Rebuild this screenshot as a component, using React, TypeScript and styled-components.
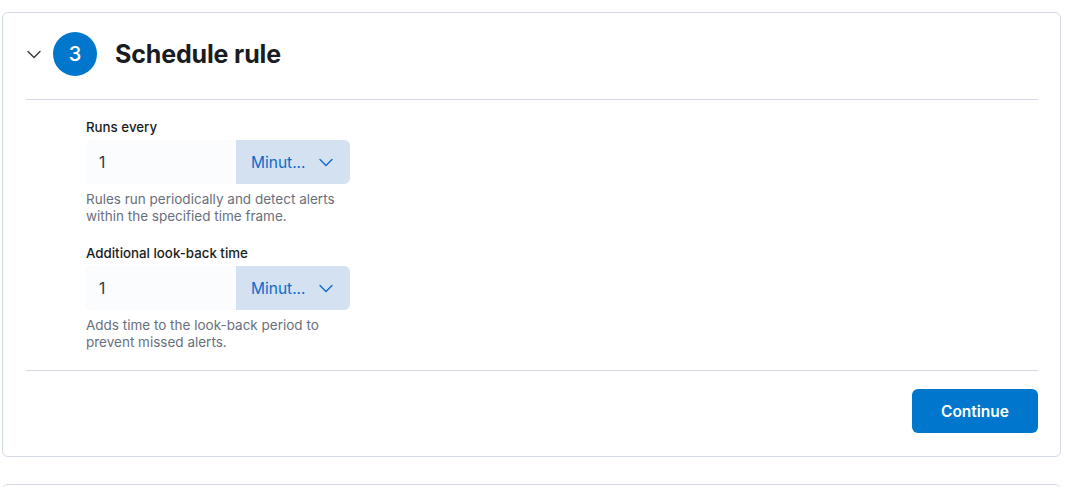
import React from "react";
import styled, { createGlobalStyle } from "styled-components";

const blue = "#0077cc";
const border = "#d3dae6";

const GlobalStyle = createGlobalStyle`
  html, body {
    margin: 0;
    padding: 0;
    background: #ffffff;
    overflow: hidden;
  }
  body {
    font-family: Inter, "Noto Sans", sans-serif;
    color: #1a1c21;
  }
`;

const Page = styled.div`
  padding: 12px 21px 0 2px;
  display: flex;
  flex-direction: column;
  gap: 27px;
`;

const Panel = styled.section<{ $ghost?: boolean }>`
  border: 1px solid ${border};
  border-radius: 6px;
  padding: 0 22px 0 23px;
  min-height: ${(p) => (p.$ghost ? "60px" : "auto")};
`;

const Header = styled.div`
  display: flex;
  align-items: center;
  padding: 19px 0 23px;
`;

const Toggle = styled.button`
  width: 16px;
  height: 16px;
  padding: 0;
  border: 0;
  background: none;
  display: flex;
  align-items: center;
  justify-content: center;
  color: #343741;
  margin-right: 11px;
`;

const StepNumber = styled.div`
  width: 44px;
  height: 44px;
  border-radius: 50%;
  background: ${blue};
  color: #fff;
  font-size: 20px;
  font-weight: 500;
  display: flex;
  align-items: center;
  justify-content: center;
  margin-right: 18px;
`;

const Title = styled.h2`
  margin: 0;
  font-size: 25px;
  font-weight: 700;
  letter-spacing: -0.15px;
  color: #1a1c21;
`;

const Rule = styled.hr`
  margin: 0;
  border: 0;
  border-top: 1px solid ${border};
`;

const Form = styled.div`
  padding: 19px 0 19px 60px;
  display: flex;
  flex-direction: column;
  gap: 20px;
`;

const Field = styled.div`
  display: flex;
  flex-direction: column;
  width: 264px;
`;

const Label = styled.label`
  font-size: 13.3px;
  line-height: 16px;
  font-weight: 500;
  color: #1a1c21;
  margin-bottom: 5px;
`;

const Group = styled.div`
  display: flex;
  height: 44px;
  border-radius: 6px;
  overflow: hidden;
  box-shadow: inset 0 0 0 1px rgba(32, 60, 110, 0.1);
`;

const NumberInput = styled.div`
  width: 150px;
  background: #fbfcfd;
  display: flex;
  align-items: center;
  padding-left: 13px;
  box-sizing: border-box;
  font-size: 15.5px;
  color: #343741;
`;

const Select = styled.div`
  flex: 1;
  background: #d4e1f0;
  display: flex;
  align-items: center;
  justify-content: space-between;
  padding: 0 16px 0 15px;
  font-size: 15.5px;
  color: #0b6bcb;
`;

const Help = styled.div`
  margin-top: 7px;
  font-size: 13.5px;
  line-height: 17px;
  color: #69707d;
`;

const Footer = styled.div`
  display: flex;
  justify-content: flex-end;
  padding: 18px 0 23px;
`;

const Button = styled.button`
  width: 126px;
  height: 44px;
  border: 0;
  border-radius: 6px;
  background: ${blue};
  color: #fff;
  font-family: inherit;
  font-size: 15.5px;
  font-weight: 600;
`;

const Chevron = ({ size = 14 }: { size?: number }) => (
  <svg width={size} height={size} viewBox="0 0 16 16" fill="none">
    <path d="M2 5.5l6 6 6-6" stroke="currentColor" strokeWidth="1.4" strokeLinecap="round" strokeLinejoin="round" />
  </svg>
);

const fields = [
  {
    label: "Runs every",
    help: ["Rules run periodically and detect alerts", "within the specified time frame."],
  },
  {
    label: "Additional look-back time",
    help: ["Adds time to the look-back period to", "prevent missed alerts."],
  },
];

export default function App() {
  return (
    <>
      <GlobalStyle />
      <Page>
        <Panel>
          <Header>
            <Toggle aria-label="collapse">
              <Chevron size={16} />
            </Toggle>
            <StepNumber>3</StepNumber>
            <Title>Schedule rule</Title>
          </Header>
          <Rule />
          <Form>
            {fields.map((f) => (
              <Field key={f.label}>
                <Label>{f.label}</Label>
                <Group>
                  <NumberInput>1</NumberInput>
                  <Select>
                    <span>Minut...</span>
                    <Chevron size={16} />
                  </Select>
                </Group>
                <Help>
                  {f.help[0]}
                  <br />
                  {f.help[1]}
                </Help>
              </Field>
            ))}
          </Form>
          <Rule />
          <Footer>
            <Button>Continue</Button>
          </Footer>
        </Panel>
        <Panel $ghost />
      </Page>
    </>
  );
}
